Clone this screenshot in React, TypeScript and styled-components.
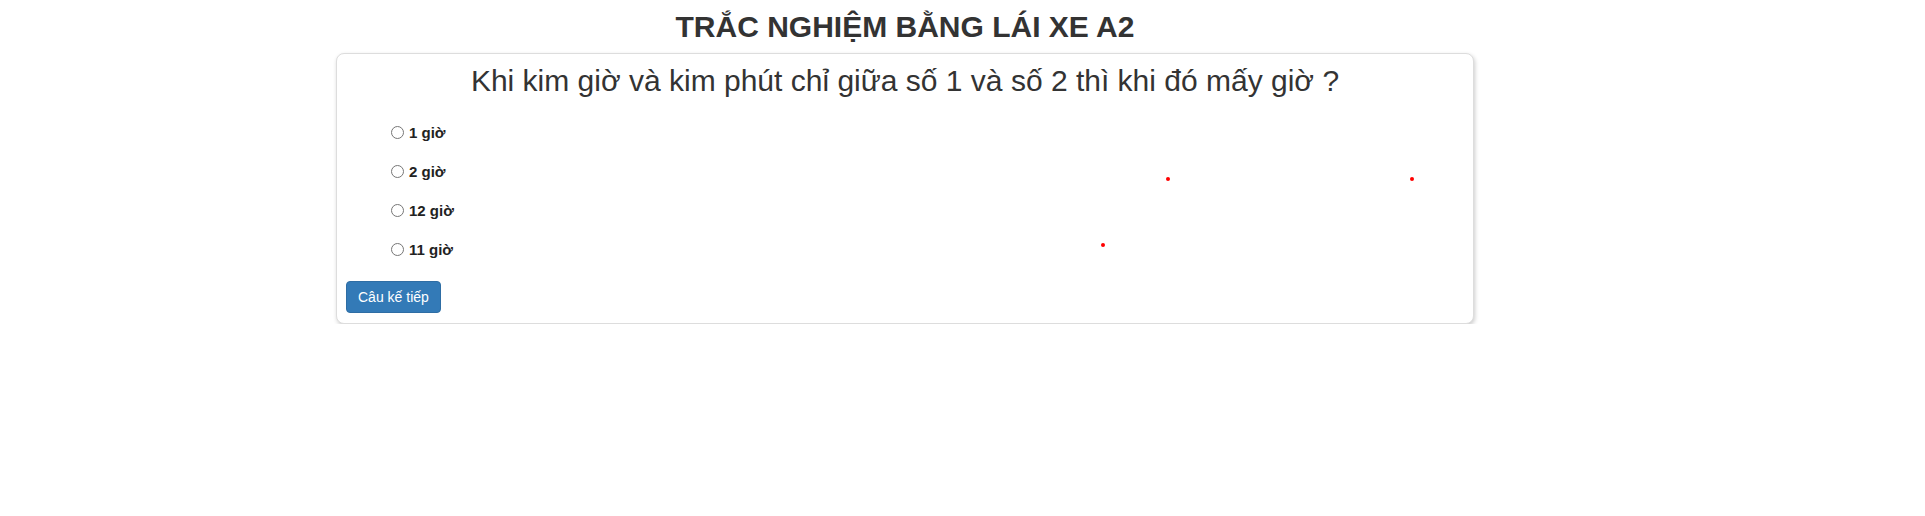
import React from "react";
import styled, { createGlobalStyle } from "styled-components";

const GlobalStyle = createGlobalStyle`
  html, body { margin: 0; padding: 0; background: #fff; }
  body { font-family: "Liberation Sans", Arial, sans-serif; color: #333; }
`;

const Page = styled.div`
  width: 1138px;
  margin-left: 336px;
  padding-top: 10px;
`;

const Title = styled.h2`
  margin: 0 0 10px;
  font-size: 30px;
  line-height: 1.1;
  font-weight: 700;
  text-align: center;
  color: #333;
`;

const Card = styled.div`
  position: relative;
  box-sizing: border-box;
  border: 1px solid #ddd;
  border-radius: 8px;
  box-shadow: 1px 2px 4px rgba(0, 0, 0, 0.2);
  padding: 10px 9px 10px;
  background: #fff;
`;

const Question = styled.h3`
  margin: 0;
  font-size: 30px;
  font-weight: 400;
  line-height: 1.1;
  text-align: center;
  color: #333;
`;

const Options = styled.div`
  display: flex;
  flex-direction: column;
  gap: 19px;
  margin: 25px 0 22px 45px;
`;

const Option = styled.label`
  display: flex;
  align-items: center;
  gap: 5px;
  height: 20px;
  font-size: 15px;
  font-weight: 700;
  color: #222;
  cursor: pointer;
`;

const Radio = styled.input`
  margin: 0;
  width: 13px;
  height: 13px;
`;

const Button = styled.button`
  display: inline-block;
  box-sizing: border-box;
  height: 32px;
  padding: 5px 11px;
  font-family: "Liberation Sans", Arial, sans-serif;
  font-size: 14px;
  line-height: 20px;
  color: #fff;
  background: #337ab7;
  border: 1px solid #2e6da4;
  border-radius: 4px;
  cursor: pointer;
`;

const Dot = styled.span<{ $x: number; $y: number }>`
  position: absolute;
  left: ${(p) => p.$x}px;
  top: ${(p) => p.$y}px;
  width: 4px;
  height: 4px;
  border-radius: 50%;
  background: #f00;
`;

const answers = ["1 giờ", "2 giờ", "12 giờ", "11 giờ"];
const dots = [
  { x: 1167 - 336 - 2, y: 178 - 53 - 2 },
  { x: 1411 - 336 - 2, y: 178 - 53 - 2 },
  { x: 1102 - 336 - 2, y: 244 - 53 - 2 },
];

export default function App() {
  return (
    <>
      <GlobalStyle />
      <Page>
        <Title>TRẮC NGHIỆM BẰNG LÁI XE A2</Title>
        <Card>
          <Question>Khi kim giờ và kim phút chỉ giữa số 1 và số 2 thì khi đó mấy giờ ?</Question>
          <Options>
            {answers.map((a) => (
              <Option key={a}>
                <Radio type="radio" name="answer" />
                {a}
              </Option>
            ))}
          </Options>
          <Button type="button">Câu kế tiếp</Button>
          {dots.map((d, i) => (
            <Dot key={i} $x={d.x} $y={d.y} />
          ))}
        </Card>
      </Page>
    </>
  );
}
